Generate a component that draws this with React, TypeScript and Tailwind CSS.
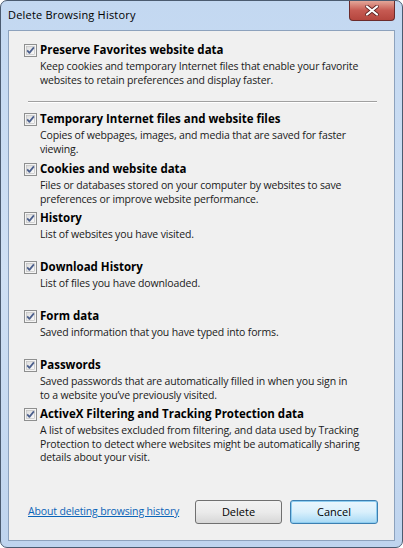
import React from 'react';

const font = { fontFamily: '"Open Sans", "Noto Sans", Arial, sans-serif' };

const items = [
  {
    title: 'Temporary Internet files and website files',
    desc: ['Copies of webpages, images, and media that are saved for faster', 'viewing.'],
  },
  {
    title: 'Cookies and website data',
    desc: ['Files or databases stored on your computer by websites to save', 'preferences or improve website performance.'],
  },
  { title: 'History', desc: ['List of websites you have visited.'] },
  { title: 'Download History', desc: ['List of files you have downloaded.'] },
  { title: 'Form data', desc: ['Saved information that you have typed into forms.'] },
  {
    title: 'Passwords',
    desc: ['Saved passwords that are automatically filled in when you sign in', 'to a website you\u2019ve previously visited.'],
  },
  {
    title: 'ActiveX Filtering and Tracking Protection data',
    desc: [
      'A list of websites excluded from filtering, and data used by Tracking',
      'Protection to detect where websites might be automatically sharing',
      'details about your visit.',
    ],
  },
];

// Win7 style checked checkbox
const CheckBox = () => (
  <svg width="13" height="13" viewBox="0 0 13 13" className="shrink-0">
    <defs>
      <linearGradient id="cbg" x1="0" y1="0" x2="1" y2="1">
        <stop offset="0" stopColor="#dcdcdc" />
        <stop offset="1" stopColor="#fbfbfb" />
      </linearGradient>
    </defs>
    <rect x="0.5" y="0.5" width="12" height="12" fill="#f4f4f4" stroke="#8e8f8f" />
    <rect x="2.5" y="2.5" width="8" height="8" fill="url(#cbg)" stroke="#b9b9b9" strokeWidth="0.6" />
    <path d="M3.2 6.4 L5.4 8.9 L9.9 3.4" fill="none" stroke="#4b5f8c" strokeWidth="1.7" strokeLinejoin="round" />
  </svg>
);

const Item = ({ title, desc, h }: { title: string; desc: string[]; h: string }) => (
  <div className={h}>
    <div className="flex items-center h-[16px] gap-[3px]">
      <CheckBox />
      <span className="font-bold text-[11.5px] text-black">{title}</span>
    </div>
    <div className="mt-[2px] pl-[16px] text-[10.5px] tracking-[-0.15px] leading-[13.5px] text-[#1a1a1a]">
      {desc.map((d, i) => (
        <div key={i}>{d}</div>
      ))}
    </div>
  </div>
);

export default function App() {
  return (
    <div
      style={font}
      className="w-[403px] h-[548px] rounded-[7px] border border-[#4b5b70] bg-gradient-to-b from-[#c3d8f1] via-[#cfe0f4] to-[#bfd4ee] flex flex-col overflow-hidden"
    >
      {/* Title bar */}
      <div className="relative h-[29px] flex items-center pl-[7px] shrink-0">
        <span className="text-[11px] tracking-[0.2px] text-black">Delete Browsing History</span>
        <div className="absolute top-0 right-[7px] w-[46px] h-[20px] rounded-b-[4px] border border-t-0 border-[#6b2b2b] bg-gradient-to-b from-[#e3a699] via-[#c65a52] to-[#b5463e] flex items-center justify-center">
          <svg width="14" height="11" viewBox="0 0 14 11">
            <path d="M2 1.5 L12 9.5 M12 1.5 L2 9.5" stroke="#5a2020" strokeWidth="3.6" strokeLinecap="round" />
            <path d="M2 1.5 L12 9.5 M12 1.5 L2 9.5" stroke="#ffffff" strokeWidth="2.2" strokeLinecap="round" />
          </svg>
        </div>
      </div>

      {/* Client area */}
      <div className="flex-1 mx-[7px] mb-[6px] border border-[#8da2bd] bg-[#f0f0f0] flex flex-col">
        <div className="pl-[15px] pt-[11px]">
          <Item
            h="h-[49px]"
            title="Preserve Favorites website data"
            desc={['Keep cookies and temporary Internet files that enable your favorite', 'websites to retain preferences and display faster.']}
          />
          <div className="mt-[10px] mb-[8px] ml-[4px] mr-[17px] border-t border-[#a0a0a0] border-b border-b-white" />
          {items.map((it, i) => (
            <Item key={it.title} h={i === 0 ? 'h-[50px]' : 'h-[49px]'} title={it.title} desc={it.desc} />
          ))}
        </div>

        {/* Footer */}
        <div className="mt-auto flex items-center pl-[19px] pr-[16px] pb-[16px]">
          <a href="#" className="text-[10.5px] tracking-[-0.15px] text-[#0b64b8] underline">
            About deleting browsing history
          </a>
          <button className="ml-auto w-[87px] h-[24px] rounded-[3px] border border-[#707070] bg-gradient-to-b from-[#f2f2f2] via-[#ebebeb] to-[#d7d7d7] text-[11px] text-black">
            Delete
          </button>
          <button className="ml-[8px] w-[88px] h-[24px] rounded-[3px] border border-[#3c7fb1] bg-gradient-to-b from-[#eaf6fd] via-[#d9f0fc] to-[#a7d9f5] text-[11px] text-black shadow-[inset_0_0_0_1px_#8ecdf0]">
            Cancel
          </button>
        </div>
      </div>
    </div>
  );
}
